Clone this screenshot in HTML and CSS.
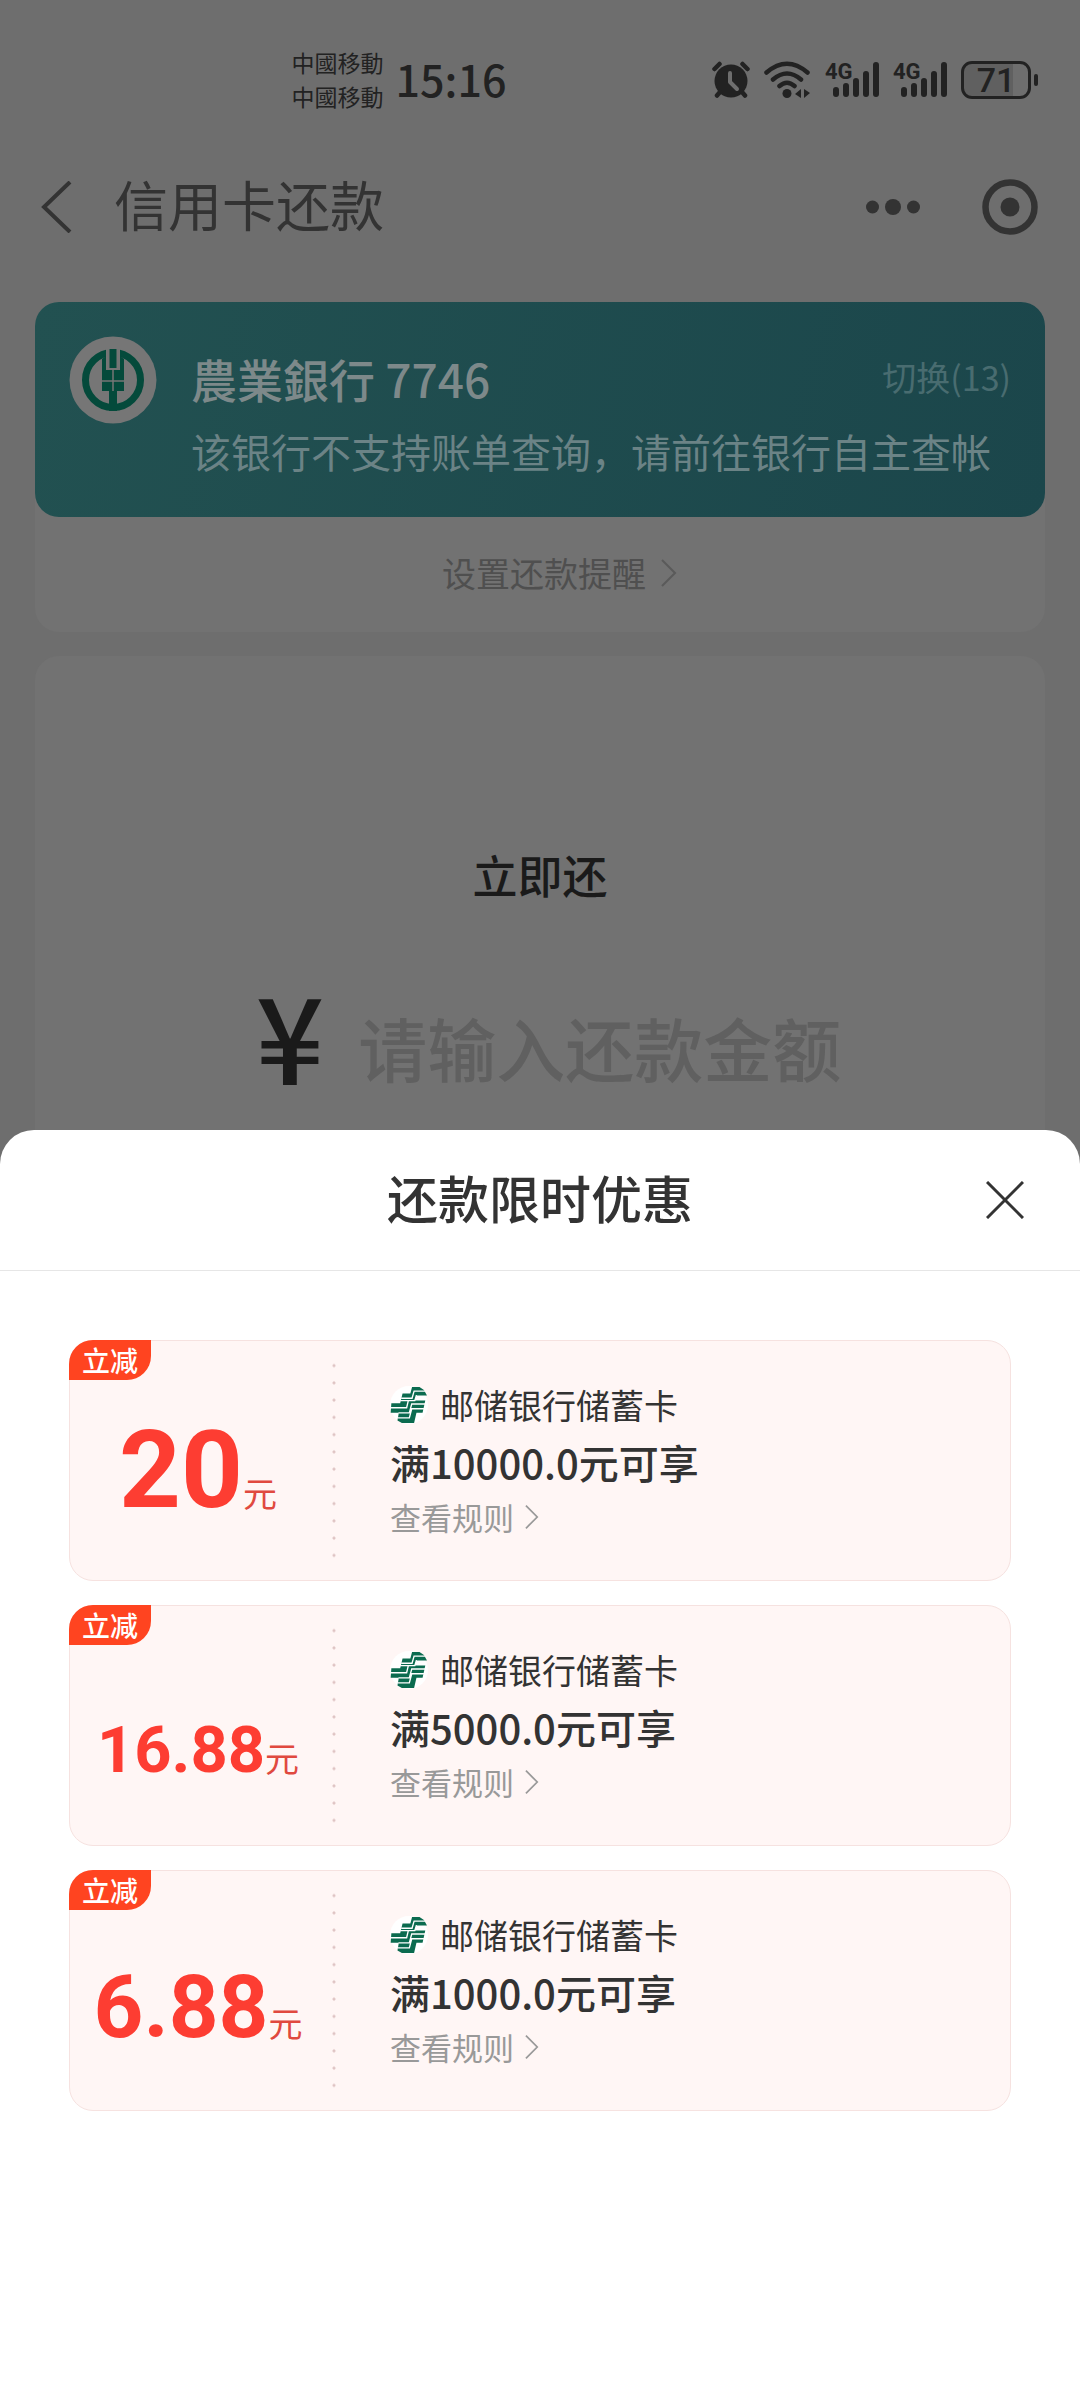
FILE: index.html
```html
<!DOCTYPE html>
<html lang="zh-CN">
<head>
<meta charset="utf-8">
<meta name="viewport" content="width=device-width, initial-scale=1">
<title>信用卡还款</title>
<link rel="stylesheet" href="styles.css">
</head>
<body>
<svg class="defs" aria-hidden="true">
  <symbol id="psbc" viewBox="63 85 112 112">
    <circle cx="119" cy="141" r="56" fill="#fff"/>
    <path fill="#0b6b4f" d="M128 88H150L163 97L172 113H141L136 128H167L159 164H141L134 194H98L85 187L89 164H65L67 136H93L100 107H123Z"/>
    <path fill="none" stroke="#fff" stroke-width="4" d="M96 121H128L134 100H166M66 149H112L117 128M88 164H120L127 138H168M86 179H120L127 152H163M141 112L136 128H93"/>
  </symbol>
  <symbol id="bars" viewBox="0 0 54 38">
    <path stroke="#222" stroke-width="6" stroke-linecap="round" d="M11 29V33M21 25V33M31 20V33M41 13V33M51 4V33"/>
  </symbol>
  <symbol id="chevron" viewBox="0 0 18 30">
    <path fill="none" stroke="currentColor" stroke-width="2" d="M2 2L15 15L2 28"/>
  </symbol>
</svg>

<div class="status-bar">
  <div class="carriers"><span>中國移動</span><span>中國移動</span></div>
  <time class="clock">15:16</time>
  <div class="status-icons">
    <svg width="38" height="38" viewBox="0 0 38 38" role="img" aria-label="闹钟">
      <circle cx="19" cy="20" r="16.500" fill="#222"/>
      <path fill="none" stroke="#222" stroke-width="4.500" stroke-linecap="round" d="M2.500 8L7.500 3M35.500 8L30.500 3M8 31L5 34.500M30 31L33 34.500"/>
      <path fill="none" stroke="#6e6e6e" stroke-width="4" stroke-linecap="round" stroke-linejoin="round" d="M18 12V21L25 28"/>
    </svg>
    <svg width="47" height="38" viewBox="0 0 47 38" role="img" aria-label="无线网络">
      <path fill="none" stroke="#222" stroke-width="4.500" stroke-linecap="round" d="M2.500 11.500Q23 -6 43.500 11.500M9 18.500Q23 6.500 37 18.500M15.500 25Q23 18.500 30.500 25"/>
      <circle cx="23" cy="32.500" r="4.500" fill="#222"/>
      <path fill="#222" d="M37 28V37L31 33ZM40 28V37L46 32Z"/>
    </svg>
    <svg class="signal" width="54" height="38"><use href="#bars"/><text x="0" y="18">4G</text></svg>
    <svg class="signal" width="54" height="38"><use href="#bars"/><text x="0" y="18">4G</text></svg>
    <div class="battery"><span>71</span></div>
  </div>
</div>

<header class="nav">
  <button class="icon-button" aria-label="返回">
    <svg width="32" height="52" viewBox="0 0 32 52"><path fill="none" stroke="#333" stroke-width="4" d="M29 1L3 26L29 51"/></svg>
  </button>
  <h1>信用卡还款</h1>
  <button class="icon-button" aria-label="更多">
    <svg width="54" height="16" viewBox="0 0 54 16" fill="#333"><circle cx="6.500" cy="8" r="6.500"/><circle cx="27" cy="8" r="8"/><circle cx="47.500" cy="8" r="6.500"/></svg>
  </button>
  <button class="icon-button target" aria-label="关闭小程序">
    <svg width="56" height="56" viewBox="0 0 56 56"><circle cx="28" cy="28" r="24.500" fill="none" stroke="#333" stroke-width="6.500"/><circle cx="28" cy="28" r="9.500" fill="#333"/></svg>
  </button>
</header>

<main>
  <section class="panel account">
    <div class="bank-card">
      <svg class="bank-logo" width="88" height="88" viewBox="-44 -44 88 88" role="img" aria-label="农业银行">
        <circle r="43.500" fill="#767676"/>
        <circle r="27.500" fill="none" stroke="#044a3b" stroke-width="7"/>
        <path fill="#767676" d="M-7 -32H7V-10H-7Z"/>
        <path fill="#044a3b" d="M-3.500 -31H3.500V-12H-3.500ZM-11 -21L-7 -24V-10H7V-24L11 -21V11H4V31H-4V11H-11Z"/>
        <path fill="none" stroke="#767676" stroke-width="1.500" d="M-11 1H11M0 -11V11M-5 -31V-11H5V-31"/>
      </svg>
      <div class="bank-info">
        <div class="bank-line">
          <h2>農業銀行 7746</h2>
          <a href="#switch">切换(13)</a>
        </div>
        <p>该银行不支持账单查询，请前往银行自主查帐</p>
      </div>
    </div>
    <a class="remind" href="#remind">设置还款提醒 <svg width="18" height="30"><use href="#chevron"/></svg></a>
  </section>

  <section class="panel repay">
    <h2>立即还</h2>
    <div class="amount-field">
      <label for="amount">¥</label>
      <input id="amount" type="text" inputmode="decimal" placeholder="请输入还款金额">
    </div>
  </section>
</main>

<section class="sheet" role="dialog" aria-labelledby="sheet-title">
  <header class="sheet-head">
    <h2 id="sheet-title">还款限时优惠</h2>
    <button class="icon-button close" aria-label="关闭">
      <svg width="38" height="38" viewBox="0 0 38 38"><path stroke="#333" stroke-width="3" d="M1 1L37 37M37 1L1 37"/></svg>
    </button>
  </header>
  <ul class="coupons">
    <li class="coupon">
      <span class="tag">立减</span>
      <p class="price"><span class="large">20</span>元</p>
      <div class="detail">
        <p class="bank"><svg width="38" height="38"><use href="#psbc"/></svg>邮储银行储蓄卡</p>
        <p class="rule">满10000.0元可享</p>
        <a href="#rules">查看规则<svg width="16" height="26"><use href="#chevron"/></svg></a>
      </div>
    </li>
    <li class="coupon">
      <span class="tag">立减</span>
      <p class="price"><span class="small">16.88</span>元</p>
      <div class="detail">
        <p class="bank"><svg width="38" height="38"><use href="#psbc"/></svg>邮储银行储蓄卡</p>
        <p class="rule">满5000.0元可享</p>
        <a href="#rules">查看规则<svg width="16" height="26"><use href="#chevron"/></svg></a>
      </div>
    </li>
    <li class="coupon">
      <span class="tag">立减</span>
      <p class="price"><span class="medium">6.88</span>元</p>
      <div class="detail">
        <p class="bank"><svg width="38" height="38"><use href="#psbc"/></svg>邮储银行储蓄卡</p>
        <p class="rule">满1000.0元可享</p>
        <a href="#rules">查看规则<svg width="16" height="26"><use href="#chevron"/></svg></a>
      </div>
    </li>
  </ul>
</section>
</body>
</html>
```
FILE: styles.css
```css
* {
  box-sizing: border-box;
  margin: 0;
  padding: 0;
}

body {
  display: flex;
  flex-direction: column;
  min-height: 100vh;
  background: #6e6e6e;
  color: #333;
  font-family: "Noto Sans CJK SC", "Noto Sans", sans-serif;
}

svg {
  display: block;
  flex: none;
}

a {
  color: inherit;
  text-decoration: none;
}

.defs {
  position: absolute;
  width: 0;
  height: 0;
}

.icon-button {
  display: flex;
  border: 0;
  background: none;
  cursor: pointer;
}

/* Status bar */
.status-bar {
  display: flex;
  align-items: center;
  min-height: 160px;
  padding: 0 42px 0 27%;
  color: #222;
}

.carriers {
  display: flex;
  flex-direction: column;
  padding-bottom: 2px;
  font-family: "Noto Sans CJK TC", sans-serif;
  font-size: 23px;
  line-height: 34px;
}

.clock {
  margin-left: 12px;
  padding-bottom: 4px;
  font-size: 43px;
  font-weight: 500;
  line-height: 60px;
}

.status-icons {
  display: flex;
  align-items: center;
  gap: 14px;
  margin-left: auto;
}

.signal {
  overflow: visible;
  font-family: Roboto, sans-serif;
  font-size: 22px;
  font-weight: 700;
  fill: #222;
}

.battery {
  position: relative;
  width: 70px;
  height: 38px;
  margin-right: 7px;
  border: 3px solid #222;
  border-radius: 11px;
  background: linear-gradient(90deg, #606060 77%, transparent 77%);
  font-family: Roboto, sans-serif;
  font-size: 34px;
  font-weight: 500;
  line-height: 32px;
  text-align: center;
}

.battery::after {
  content: "";
  position: absolute;
  top: 10px;
  right: -10px;
  width: 4px;
  height: 12px;
  border-radius: 2px;
  background: #222;
}

/* Navigation */
.nav {
  display: flex;
  align-items: center;
  min-height: 94px;
  padding: 0 42px 0 41px;
}

.nav h1 {
  margin: 0 auto 0 41px;
  padding-bottom: 6px;
  font-size: 54px;
  font-weight: 400;
  line-height: 72px;
}

.nav .target {
  margin-left: 62px;
}

/* Account */
main {
  display: flex;
  flex-direction: column;
  gap: 24px;
  padding: 48px 35px 0;
}

.panel {
  border-radius: 24px;
  background: #727272;
}

.bank-card {
  display: flex;
  gap: 34px;
  padding: 34px;
  border-radius: 24px;
  background: linear-gradient(105deg, #225151, #1b464b);
}

.bank-info {
  flex: 1;
  padding-top: 8px;
  color: #6b8386;
}

.bank-line {
  display: flex;
  align-items: center;
  justify-content: space-between;
}

.bank-line h2 {
  color: #7d898a;
  font-family: "Noto Sans CJK TC", sans-serif;
  font-size: 46px;
  font-weight: 500;
  line-height: 68px;
}

.bank-line a {
  padding-bottom: 2px;
  color: #496c70;
  font-size: 34px;
  line-height: 64px;
}

.bank-info p {
  margin-top: 7px;
  font-size: 40px;
  line-height: 64px;
}

.remind {
  display: flex;
  align-items: center;
  justify-content: center;
  gap: 14px;
  height: 115px;
  padding: 0 0 4px 40px;
  color: #4f4f4f;
  font-size: 34px;
}

.remind svg {
  color: #5a5a5a;
}

.repay {
  display: flex;
  flex-direction: column;
  align-items: center;
  padding: 183px 24px 23px;
  border-radius: 24px 24px 0 0;
}

.repay h2 {
  color: #1a1a1a;
  font-size: 45px;
  font-weight: 500;
  line-height: 72px;
}

.amount-field {
  display: flex;
  align-items: flex-end;
  gap: 34px;
  margin-top: 48px;
  padding-left: 18px;
}

.amount-field label {
  color: #1a1a1a;
  font-size: 120px;
  font-weight: 500;
  line-height: 148px;
}

.amount-field input {
  width: 484px;
  margin-bottom: 12px;
  border: 0;
  outline: 0;
  background: none;
  color: #1a1a1a;
  font: 500 69px/96px "Noto Sans CJK SC", sans-serif;
}

.amount-field input::placeholder {
  color: #606060;
  opacity: 1;
}

/* Offers sheet */
.sheet {
  flex: 1;
  border-radius: 34px 34px 0 0;
  background: #fff;
}

.sheet-head {
  display: grid;
  grid-template-columns: 1fr auto 1fr;
  align-items: center;
  min-height: 141px;
  padding: 0 56px;
  border-bottom: 1px solid #e6e6e6;
}

.sheet-head h2 {
  grid-column: 2;
  padding-bottom: 6px;
  font-size: 51px;
  font-weight: 500;
  line-height: 72px;
}

.close {
  justify-self: end;
}

.coupons {
  display: flex;
  flex-direction: column;
  gap: 24px;
  padding: 69px;
  list-style: none;
}

.coupon {
  position: relative;
  display: flex;
  min-height: 241px;
  border: 1px solid #f6e2e0;
  border-radius: 24px;
  background: #fff6f5;
}

.tag {
  position: absolute;
  top: -1px;
  left: -1px;
  padding: 0 13px;
  border-radius: 24px 0 24px 0;
  background: #ff4420;
  color: #fff;
  font-size: 28px;
  font-weight: 500;
  line-height: 40px;
}

/* The zero line height keeps every amount on the unit's baseline */
.price {
  position: relative;
  width: 266px;
  padding: 112px 10px 0 0;
  color: #e0493f;
  font-size: 34px;
  line-height: 80px;
  text-align: center;
}

.price span {
  color: #fd3d32;
  font-family: Roboto, sans-serif;
  font-weight: 700;
  line-height: 0;
}

.price .large {
  font-size: 108px;
}

.price .medium {
  font-size: 87px;
}

.price .small {
  font-size: 65px;
}

/* Dotted divider */
.price::after {
  content: "";
  position: absolute;
  top: 16px;
  right: 0;
  bottom: 16px;
  width: 4px;
  background: radial-gradient(circle at center, #dfc4c4 1px, transparent 2px) 0 0 / 4px 17px round;
}

.detail {
  display: flex;
  flex-direction: column;
  padding: 37px 24px 0 54px;
}

.bank {
  display: flex;
  align-items: center;
  gap: 12px;
  font-size: 34px;
  line-height: 54px;
}

.rule {
  font-size: 40px;
  font-weight: 500;
  line-height: 60px;
}

.detail a {
  display: flex;
  align-items: center;
  gap: 10px;
  color: #999;
  font-size: 31px;
  line-height: 50px;
}
```
